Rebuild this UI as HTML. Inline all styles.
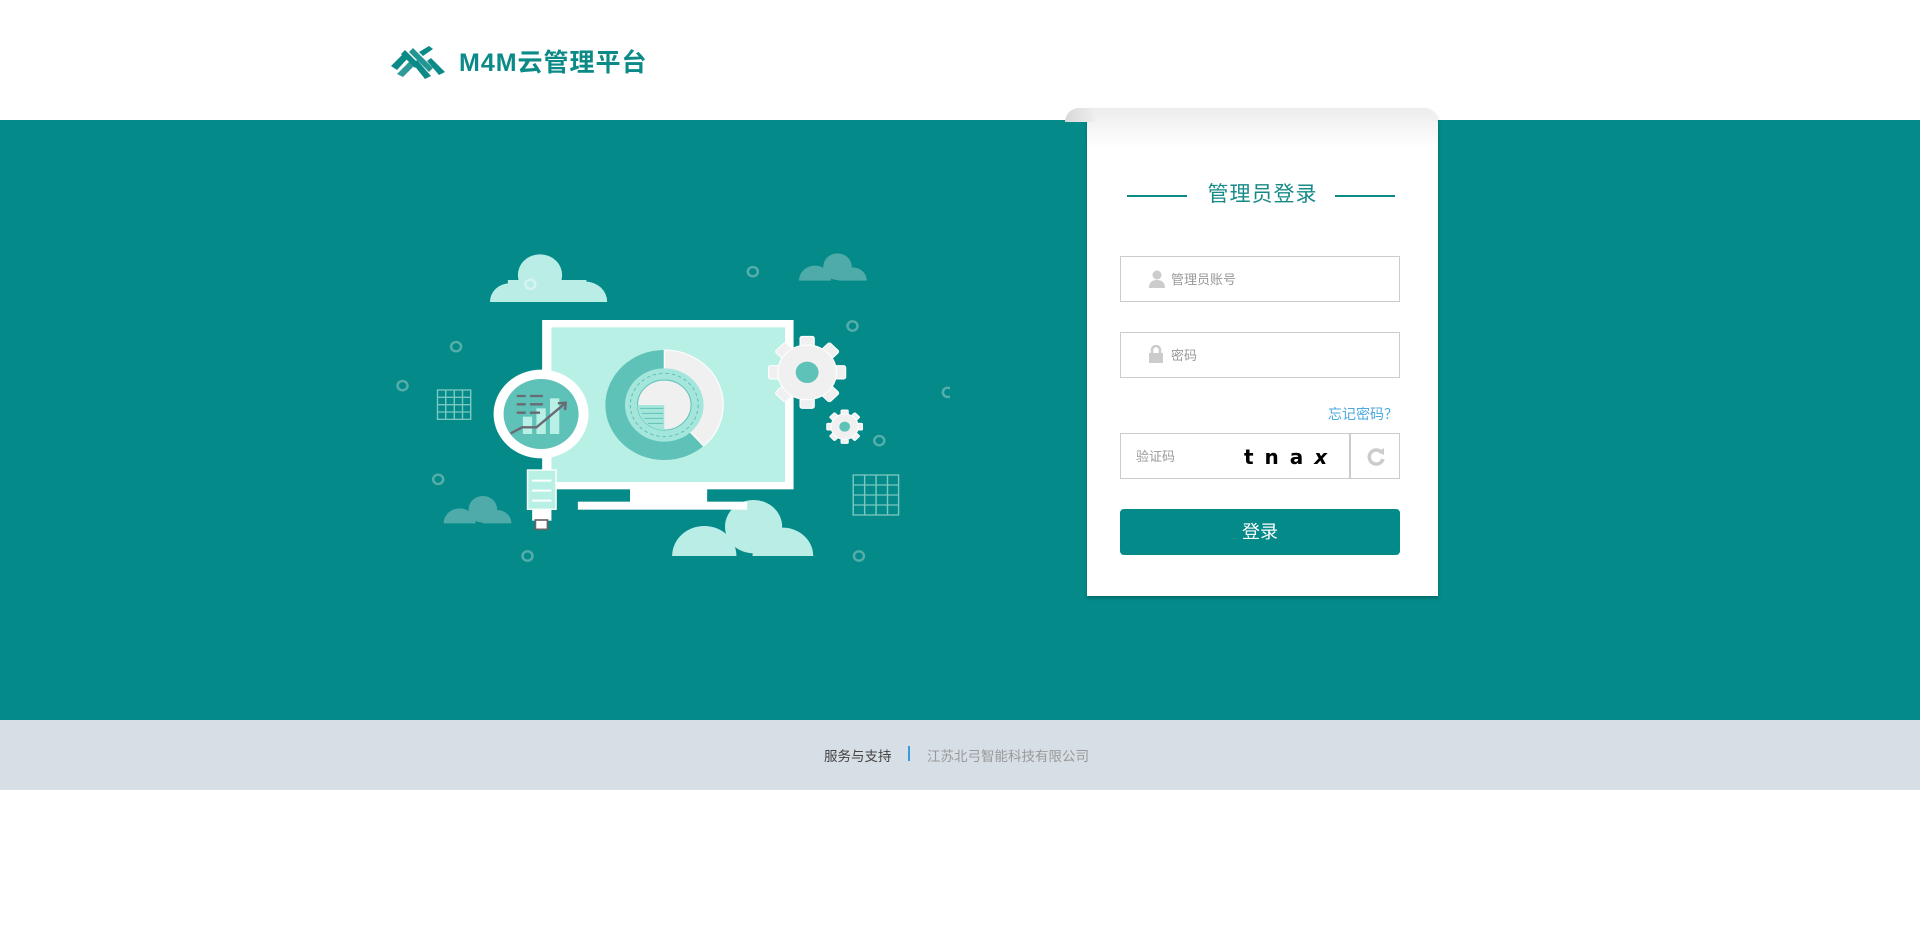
<!DOCTYPE html>
<html><head><meta charset="utf-8">
<style>
*{margin:0;padding:0;box-sizing:border-box}
body{width:1920px;height:935px;background:#fff;font-family:"Liberation Sans","Noto Sans CJK SC",sans-serif;position:relative;overflow:hidden}
.band{position:absolute;left:0;top:120px;width:1920px;height:600px;background:#038a89}
.footer{position:absolute;left:0;top:720px;width:1920px;height:70px;background:#d6dee6;font-size:13.5px}
.logo{position:absolute;left:389px;top:46px}
.logotext{position:absolute;left:459px;top:48px;font-size:25px;font-weight:bold;color:#0b8a87;letter-spacing:1px;line-height:30px}
.card{position:absolute;left:1087px;top:108px;width:351px;height:488px;background:linear-gradient(#ececec,#fff 40px,#fff);box-shadow:0 2px 3px rgba(0,0,0,.25);border-radius:0 14px 0 0}
.card .curl{position:absolute;left:-22px;top:0;width:30px;height:14px;border-radius:14px 0 0 0;background:linear-gradient(90deg,#d8d8d8,#eee)}
.title{position:absolute;left:0;top:71px;width:351px;text-align:center;font-size:21px;color:#178a88;line-height:32px;letter-spacing:1px}
.ln{position:absolute;top:87px;height:2px;width:60px;background:#0b8a87}
.inp{position:absolute;left:33px;width:280px;height:46px;border:1px solid #ccc;font-size:13px;color:#999;line-height:46px}
.btn{position:absolute;left:33px;top:401px;width:280px;height:46px;background:#038a89;border-radius:4px;color:#fff;text-align:center;font-size:18px;line-height:46px}
</style></head><body>
<svg class="logo" width="60" height="36" viewBox="0 0 60 36">
<g fill="#0b8a87">
<path d="M2 20 L14 8 L20 11 L8 24 Z"/>
<path d="M8 28 L22 14 L28 17 L14 31 Z" opacity=".85"/>
<path d="M16 4 L30 18 L26 22 L12 8 Z"/>
<path d="M24 2 L44 22 L40 26 L20 6 Z" opacity=".9"/>
<path d="M28 14 L42 30 L36 33 L24 18 Z"/>
<path d="M30 6 L40 0 L44 3 L34 10 Z"/>
<path d="M42 12 L56 26 L50 29 L38 15 Z"/>
</g></svg>
<div class="logotext">M4M云管理平台</div>
<div class="band"></div>
<svg style="position:absolute;left:390px;top:240px" width="560" height="330" viewBox="0 0 1568 990" preserveAspectRatio="none">
<defs>
<clipPath id="c1"><rect x="0" y="0" width="1568" height="186"/></clipPath>
<clipPath id="c2"><rect x="0" y="0" width="1568" height="122"/></clipPath>
<clipPath id="c3"><rect x="0" y="600" width="1568" height="250"/></clipPath>
<clipPath id="c4"><rect x="0" y="600" width="1568" height="348"/></clipPath>
</defs>
<g fill="#b9ede6">
<g clip-path="url(#c1)"><circle cx="420" cy="105" r="62"/><circle cx="335" cy="185" r="55"/><circle cx="548" cy="185" r="60"/><rect x="330" y="120" width="220" height="70"/></g>
<g clip-path="url(#c4)"><circle cx="1018" cy="860" r="80"/><circle cx="880" cy="948" r="90"/><circle cx="1100" cy="948" r="85"/></g>
</g>
<g fill="#4eaba9">
<g clip-path="url(#c2)"><circle cx="1253" cy="80" r="40"/><circle cx="1190" cy="122" r="45"/><circle cx="1295" cy="122" r="40"/></g>
<g clip-path="url(#c3)"><circle cx="260" cy="808" r="40"/><circle cx="195" cy="850" r="45"/><circle cx="300" cy="850" r="40"/></g>
</g>
<g fill="none" stroke="#56aeaa" stroke-width="7">
<circle cx="1016" cy="95" r="14"/><circle cx="393" cy="133" r="14" stroke="#d5f4ef"/><circle cx="185" cy="320" r="14"/><circle cx="35" cy="437" r="14"/><circle cx="1295" cy="258" r="14"/><circle cx="1370" cy="602" r="14"/><circle cx="135" cy="718" r="14"/><circle cx="385" cy="948" r="14"/><circle cx="1313" cy="948" r="14"/><circle cx="1562" cy="457" r="14"/>
</g>
<g fill="none" stroke="#7cc6c1" stroke-width="4">
<rect x="133" y="450" width="93" height="88"/><path d="M156 450V538M180 450V538M203 450V538M133 472H226M133 494H226M133 516H226"/>
<rect x="1297" y="705" width="127" height="120"/><path d="M1329 705V825M1361 705V825M1393 705V825M1297 735H1424M1297 765H1424M1297 795H1424"/>
</g>
<rect x="426" y="240" width="704" height="508" fill="#fff"/>
<rect x="452" y="262" width="654" height="464" fill="#b9f0e6"/>
<rect x="672" y="745" width="216" height="45" fill="#fff"/>
<rect x="526" y="785" width="474" height="24" fill="#fff"/>
<circle cx="768" cy="495" r="165" fill="#5fc2b8"/>
<path d="M768 330 A165 165 0 0 1 878 618 L768 495Z" fill="#f0f0f0" stroke="#fff" stroke-width="3"/>
<circle cx="768" cy="495" r="110" fill="#a5e6dc"/>
<circle cx="768" cy="495" r="95" fill="none" stroke="#5fc2b8" stroke-width="3" stroke-dasharray="10 8"/>
<circle cx="768" cy="495" r="75" fill="#f0f0f0" stroke="#5fc2b8" stroke-width="3"/>
<path d="M693 495 H768 V570 A75 75 0 0 1 693 495Z" fill="#a5e6dc"/>
<g stroke="#5fc2b8" stroke-width="3"><path d="M700 505H765M705 520H765M712 535H765M722 550H765"/></g>
<g fill="#f0f0f0" stroke="#fff" stroke-width="3">
<g transform="translate(1168,397)">
<rect x="-20" y="-108" width="40" height="216" rx="6"/><rect x="-20" y="-108" width="40" height="216" rx="6" transform="rotate(45)"/><rect x="-20" y="-108" width="40" height="216" rx="6" transform="rotate(90)"/><rect x="-20" y="-108" width="40" height="216" rx="6" transform="rotate(135)"/>
<circle r="82"/></g>
<g transform="translate(1273,560)">
<rect x="-10" y="-50" width="20" height="100" rx="3"/><rect x="-10" y="-50" width="20" height="100" rx="3" transform="rotate(45)"/><rect x="-10" y="-50" width="20" height="100" rx="3" transform="rotate(90)"/><rect x="-10" y="-50" width="20" height="100" rx="3" transform="rotate(135)"/>
<circle r="38"/></g>
</g>
<circle cx="1168" cy="397" r="32" fill="#5fc2b8"/><circle cx="1273" cy="560" r="15" fill="#5fc2b8"/>
<rect x="385" y="690" width="80" height="118" fill="#b9f0e6" stroke="#fff" stroke-width="4"/>
<g stroke="#fff" stroke-width="6"><path d="M398 722H452M398 752H452M398 782H452"/></g>
<rect x="398" y="808" width="54" height="34" fill="#fff"/>
<rect x="407" y="840" width="34" height="28" fill="#fff" stroke="#666" stroke-width="5"/>
<circle cx="423" cy="522" r="133" fill="#fff"/>
<circle cx="423" cy="522" r="105" fill="#5fc2b8"/>
<g fill="#b9f0e6"><rect x="372" y="530" width="26" height="52"/><rect x="410" y="505" width="26" height="77"/><rect x="448" y="475" width="26" height="107"/></g>
<g stroke="#6a6a72" stroke-width="7"><path d="M355 468H380M392 468H428M355 493H380M392 493H428M355 518H380M392 518H420"/></g>
<path d="M338 580 L370 562 H410 L488 492" fill="none" stroke="#6a6a72" stroke-width="7"/>
<path d="M470 490 L492 488 L490 510" fill="none" stroke="#6a6a72" stroke-width="7"/>
</svg>
<div class="card">
<div class="curl"></div>
<div class="ln" style="left:40px"></div><div class="ln" style="left:248px"></div>
<div class="title">管理员登录</div>
<div class="inp" style="top:148px;padding-left:50px">管理员账号
<svg style="position:absolute;left:28px;top:13px" width="16" height="18" viewBox="0 0 16 18"><circle cx="8" cy="5" r="4.5" fill="#ccc"/><path d="M0 18 Q0 10 8 10 Q16 10 16 18Z" fill="#ccc"/></svg></div>
<div class="inp" style="top:224px;padding-left:50px">密码
<svg style="position:absolute;left:28px;top:12px" width="14" height="18" viewBox="0 0 14 18"><path d="M3 8V5a4 4 0 0 1 8 0v3" fill="none" stroke="#ccc" stroke-width="2.5"/><rect x="0" y="8" width="14" height="10" fill="#ccc"/></svg></div>
<div style="position:absolute;right:40px;top:296px;font-size:14px;color:#4aa7e0;font-family:'Noto Sans CJK SC',sans-serif">忘记密码？</div>
<div class="inp" style="top:325px;width:230px;padding-left:15px">验证码<span style="position:absolute;left:123px;top:0;font-size:20px;font-weight:bold;color:#000;letter-spacing:11px;font-family:'DejaVu Sans',sans-serif">tna<i>x</i></span></div>
<div class="inp" style="top:325px;left:263px;width:50px">
<svg style="position:absolute;left:15px;top:13px" width="20" height="20" viewBox="0 0 20 20"><path d="M16 6 A7 7 0 1 0 17 12" fill="none" stroke="#ccc" stroke-width="3.5"/><path d="M12 5 L18 1 L18 8Z" fill="#ccc"/></svg></div>
<div class="btn">登录</div>
</div>
<div class="footer">
<span style="position:absolute;left:824px;top:25px;color:#444">服务与支持</span>
<span style="position:absolute;left:908px;top:26px;width:2px;height:15px;background:#3a9bd8"></span>
<span style="position:absolute;left:927px;top:25px;color:#999">江苏北弓智能科技有限公司</span>
</div>
</body></html>
